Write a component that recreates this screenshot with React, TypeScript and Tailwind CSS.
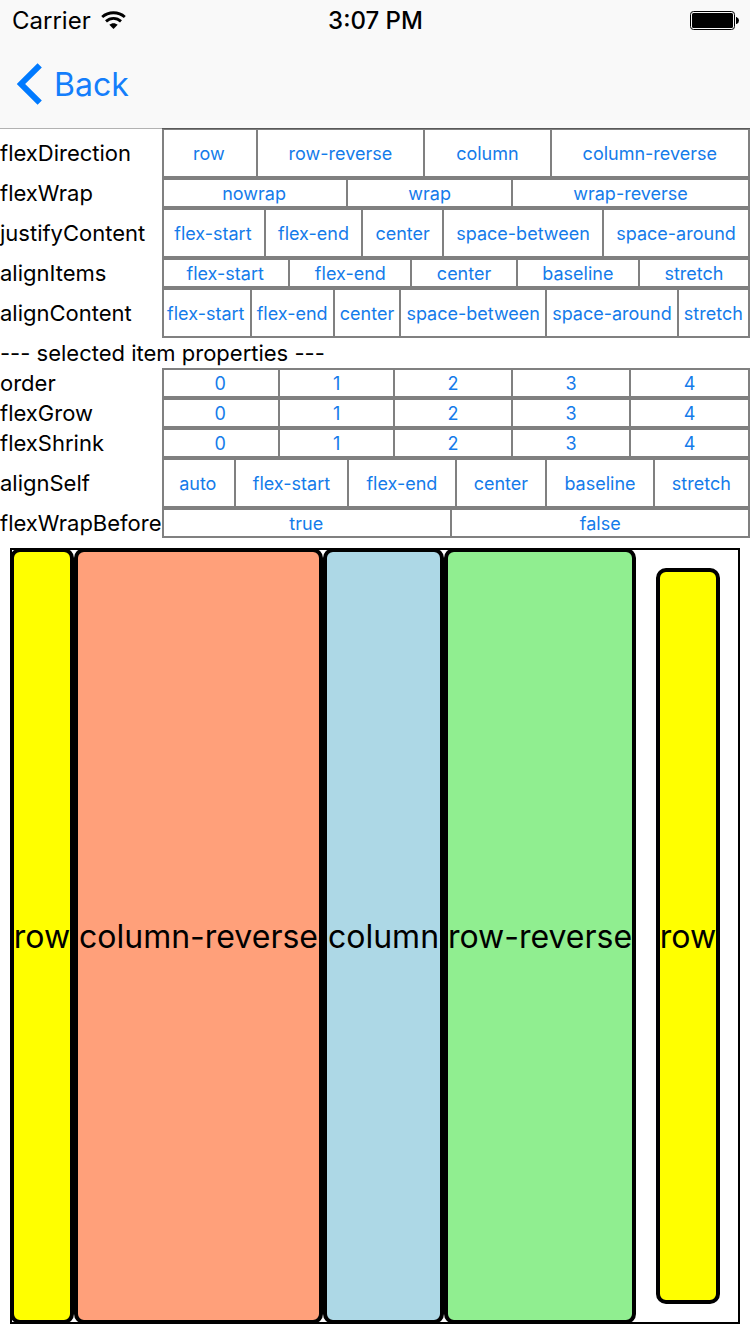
type Property = { name: string; options: string[]; tall?: boolean };

const containerProperties: Property[] = [
  { name: "flexDirection", options: ["row", "row-reverse", "column", "column-reverse"], tall: true },
  { name: "flexWrap", options: ["nowrap", "wrap", "wrap-reverse"] },
  { name: "justifyContent", options: ["flex-start", "flex-end", "center", "space-between", "space-around"], tall: true },
  { name: "alignItems", options: ["flex-start", "flex-end", "center", "baseline", "stretch"] },
  { name: "alignContent", options: ["flex-start", "flex-end", "center", "space-between", "space-around", "stretch"], tall: true },
];

const itemProperties: Property[] = [
  { name: "order", options: ["0", "1", "2", "3", "4"] },
  { name: "flexGrow", options: ["0", "1", "2", "3", "4"] },
  { name: "flexShrink", options: ["0", "1", "2", "3", "4"] },
  { name: "alignSelf", options: ["auto", "flex-start", "flex-end", "center", "baseline", "stretch"], tall: true },
  { name: "flexWrapBefore", options: ["true", "false"] },
];

const items = [
  { text: "row", style: "grow-[56] bg-[#ffff00]" },
  { text: "column-reverse", style: "grow-[241] bg-[#ffa07a]" },
  { text: "column", style: "grow-[113] bg-[#add8e6]" },
  { text: "row-reverse", style: "grow-[184] bg-[#90ee90]" },
  { text: "row", style: "grow-[56] m-5 bg-[#ffff00]" },
];

function PropertyRow({ name, options, tall }: Property) {
  return (
    <div role="group" aria-labelledby={name} className={`flex items-stretch ${tall ? "h-[50px]" : "h-[30px]"}`}>
      <span id={name} className="flex w-[162px] shrink-0 items-center whitespace-nowrap text-[22px] leading-none">
        {name}
      </span>
      <div className="flex min-w-0 flex-1 ring-2 ring-[#808080] ring-inset">
        {options.map((option) => (
          <button
            key={option}
            type="button"
            className="flex-auto whitespace-nowrap border-r-2 border-[#808080] pt-0.5 text-center text-[18px] leading-none text-[#147bea]"
          >
            {option}
          </button>
        ))}
      </div>
    </div>
  );
}

function StatusBar() {
  return (
    <div className="grid h-10 grid-cols-3 items-center pt-px pl-3 pr-[11px] text-[24px] leading-none">
      <div className="flex items-center gap-2.5">
        <span>Carrier</span>
        <svg width="25" height="19" viewBox="0 0 25 19" fill="none" stroke="#000" aria-hidden="true">
          <path d="M1.200 6C7.500 .3 17.500 .3 23.800 6" strokeWidth="2.800" />
          <path d="M5 10.400C9.300 6.400 15.700 6.400 20 10.400" strokeWidth="2.800" />
          <path d="M12.500 18 8.300 13.800C10.700 11.700 14.300 11.700 16.700 13.800Z" fill="#000" stroke="none" />
        </svg>
      </div>
      <span className="text-center font-medium">3:07 PM</span>
      <svg className="justify-self-end" width="49" height="19" viewBox="0 0 49 19" aria-hidden="true">
        <rect x=".5" y=".5" width="44" height="18" rx="3" fill="none" stroke="#000" />
        <rect x="2" y="2" width="41" height="15" rx="1.500" />
        <path d="M46 6h.5q2.500 1 2.500 3.500T46.500 13H46Z" />
      </svg>
    </div>
  );
}

export default function App() {
  return (
    <div className="flex min-h-screen flex-col bg-white font-['Inter','Liberation_Sans',sans-serif] text-black">
      <header className="relative h-32 bg-[#f9f9f9]">
        <StatusBar />
        <nav className="flex h-[88px] items-center pl-4">
          <a href="#back" className="flex items-center gap-3 text-[32px] leading-none text-[#147efb]">
            <svg width="26" height="42" viewBox="0 0 26 42" fill="none" stroke="#007aff" aria-hidden="true">
              <path d="M23.700 2.300 5 21 23.700 39.700" strokeWidth="6" />
            </svg>
            <span className="pt-0.5">Back</span>
          </a>
        </nav>
        <div className="absolute inset-x-0 top-full h-px bg-black/30" />
      </header>

      <main className="flex flex-1 flex-col">
        <section>
          {containerProperties.map((property) => (
            <PropertyRow key={property.name} {...property} />
          ))}
        </section>
        <section>
          <h2 className="flex h-[30px] items-center text-[22px] leading-none">--- selected item properties ---</h2>
          {itemProperties.map((property) => (
            <PropertyRow key={property.name} {...property} />
          ))}
        </section>
        <section className="m-2.5 flex flex-1 items-stretch ring-2 ring-black ring-inset">
          {items.map((item, index) => (
            <button
              key={index}
              type="button"
              className={`flex min-w-0 basis-0 items-center justify-center whitespace-nowrap rounded-[10px] border-4 border-black pt-0.5 text-[32px] leading-none ${item.style}`}
            >
              {item.text}
            </button>
          ))}
        </section>
      </main>
    </div>
  );
}
